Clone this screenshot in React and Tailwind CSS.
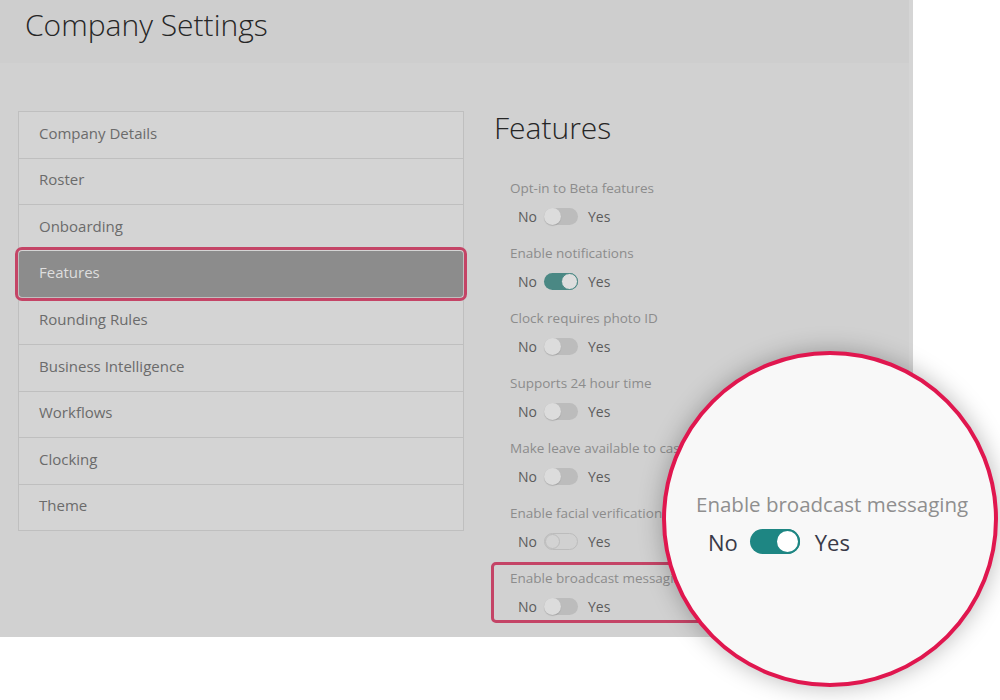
import React from "react";

const menu = [
  "Company Details",
  "Roster",
  "Onboarding",
  "Features",
  "Rounding Rules",
  "Business Intelligence",
  "Workflows",
  "Clocking",
  "Theme",
];

const features = [
  { label: "Opt-in to Beta features", on: false },
  { label: "Enable notifications", on: true },
  { label: "Clock requires photo ID", on: false },
  { label: "Supports 24 hour time", on: false },
  { label: "Make leave available to casuals", on: false },
  { label: "Enable facial verification", on: false, outline: true },
  { label: "Enable broadcast messaging", on: false, marked: true },
];

function Toggle({ on, outline }) {
  if (outline) {
    return (
      <span className="relative inline-block w-[34px] h-[17px] rounded-full border border-[#bcbcbc]">
        <span className="absolute left-0 top-0 w-[15px] h-[15px] rounded-full border border-[#bcbcbc] bg-[#d3d3d3]" />
      </span>
    );
  }
  return (
    <span
      className={
        on
          ? "relative inline-block w-[34px] h-[17px] rounded-full bg-[#4a8884]"
          : "relative inline-block w-[34px] h-[17px] rounded-full bg-[#bcbcbc]"
      }
    >
      <span
        className={
          on
            ? "absolute right-0 top-0 w-[17px] h-[17px] rounded-full bg-[#dedede] border border-[#4a8884]"
            : "absolute left-0 top-0 w-[17px] h-[17px] rounded-full bg-[#dcdcdc] shadow-[0_1px_1px_rgba(0,0,0,0.15)]"
        }
      />
    </span>
  );
}

function FeatureRow({ label, on, outline, marked }) {
  return (
    <div className="relative">
      {marked && (
        <div className="absolute -left-[19px] -top-[7px] -bottom-[7px] w-[240px] rounded-[5px] border-[3px] border-[#c44466]" />
      )}
      <div className="text-[13.5px] leading-[18px] text-[#8c8c8c]">{label}</div>
      <div className="mt-[9px] h-[20px] flex items-center pl-[8px] text-[14px] text-[#5c5c5c]">
        <span>No</span>
        <span className="ml-[7px] mr-[10px] flex items-center">
          <Toggle on={on} outline={outline} />
        </span>
        <span>Yes</span>
      </div>
    </div>
  );
}

export default function App() {
  return (
    <div className="relative w-[1000px] h-[700px] bg-white overflow-hidden font-['Open_Sans',sans-serif]">
      <div className="w-[913px] h-[637px] bg-[#d1d1d1] border-r-[4px] border-[#d5d5d5]">
        <div className="h-[63px] bg-[#cecece] pl-[25px] pt-[6px]">
          <h1 className="text-[30px] leading-[38px] font-light text-[#262626]">Company Settings</h1>
        </div>

        <div className="flex items-start pt-[48px] pl-[18px]">
          <ul className="w-[446px] border border-[#bfbfbf] bg-[#d4d4d4]">
            {menu.map((item, i) =>
              item === "Features" ? (
                <li
                  key={item}
                  className="relative z-10 h-[46.6px] flex items-center pl-[20px] pb-[4px] text-[15px] text-[#dedede] bg-[#8c8c8c] rounded-[3px] outline-[3px] outline-[#c44466] outline-offset-[1px]"
                >
                  {item}
                </li>
              ) : (
                <li
                  key={item}
                  className={
                    i === 0
                      ? "h-[45.6px] flex items-center pl-[20px] pb-[4px] text-[15px] text-[#6b6b6b]"
                      : "h-[46.6px] flex items-center pl-[20px] pb-[4px] text-[15px] text-[#6b6b6b] border-t border-[#bfbfbf]"
                  }
                >
                  {item}
                </li>
              )
            )}
          </ul>

          <div className="ml-[30px] flex-1">
            <h2 className="text-[30px] leading-[34px] font-light text-[#262626]">Features</h2>
            <div className="mt-[34px] ml-[16px] flex flex-col gap-[18px]">
              {features.map((f) => (
                <FeatureRow key={f.label} {...f} />
              ))}
            </div>
          </div>
        </div>
      </div>

      {/* magnified callout */}
      <div className="absolute left-[662px] top-[351px] w-[336px] h-[336px] rounded-full border-[4px] border-[#e0174f] bg-[#f8f8f8] shadow-[0_0_24px_rgba(0,0,0,0.28)] flex flex-col justify-center pl-[30px] pt-[9px]">
        <div className="text-[20.5px] leading-[24px] text-[#8f8f8f]">Enable broadcast messaging</div>
        <div className="mt-[12px] ml-[12px] flex items-center text-[22px] leading-[28px] text-[#3a3a48]">
          <span>No</span>
          <span className="ml-[12px] mr-[15px] relative inline-block w-[50px] h-[25px] rounded-full bg-[#1e8683]">
            <span className="absolute right-0 top-0 w-[25px] h-[25px] rounded-full bg-white border-[2px] border-[#1e8683]" />
          </span>
          <span>Yes</span>
        </div>
      </div>
    </div>
  );
}
